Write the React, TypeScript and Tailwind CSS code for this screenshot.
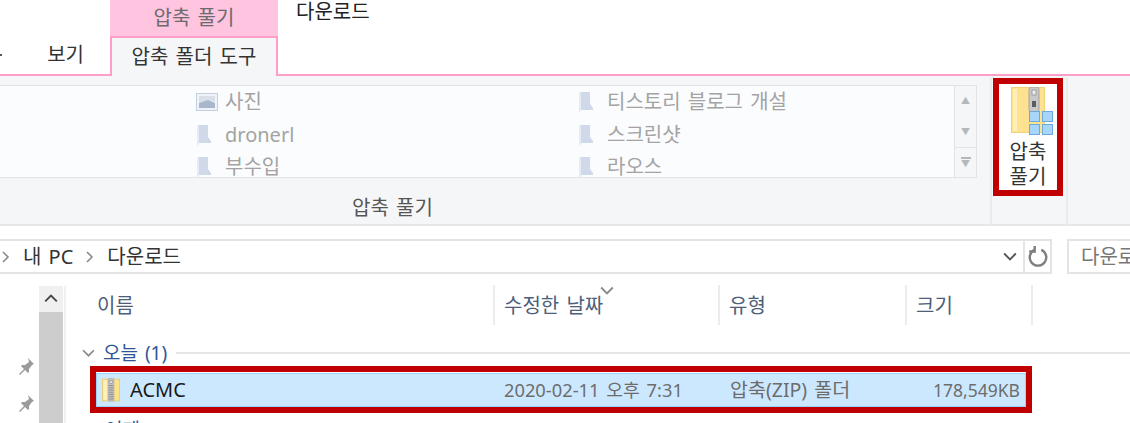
const font = '[font-family:"Noto_Sans","Noto_Sans_CJK_KR",sans-serif]';

function ZipFolderIcon({ className }: { className?: string }) {
  return (
    <svg viewBox="0 0 24 32" className={className}>
      <rect x="0.5" y="1.5" width="23" height="29" fill="#fde28c" stroke="#e8c76a" />
      <rect x="2" y="3" width="5" height="26" fill="#fff0b8" />
      <rect x="8" y="0" width="8" height="31" rx="2" fill="#c4c4c4" stroke="#999" strokeWidth="0.6" />
      <rect x="10.5" y="3" width="3" height="4" fill="#e6e6e6" stroke="#777" strokeWidth="0.6" />
      <path d="M9 10h6M9 13h6M9 16h6M9 19h6M9 22h6M9 25h6M9 28h6" stroke="#7c7c7c" strokeWidth="1" />
    </svg>
  );
}

function ExtractIcon() {
  return (
    <svg viewBox="0 0 42 48" className="h-[48px] w-[42px]">
      <rect x="0.5" y="0.5" width="33" height="45" fill="#fee28f" stroke="#f0d27c" />
      <rect x="2" y="2" width="4" height="42" fill="#fff0b8" />
      <rect x="18" y="0" width="10" height="25" rx="2.5" fill="#c9c9c9" stroke="#a3a3a3" />
      <rect x="21" y="3" width="4" height="5" fill="#ececec" stroke="#888" strokeWidth="0.7" />
      <rect x="21" y="14" width="4" height="6" fill="#5c5c5c" />
      <g fill="#a8d6fb" stroke="#6da9dc" strokeWidth="1">
        <rect x="18.5" y="24.5" width="10" height="10" />
        <rect x="31.5" y="24.5" width="10" height="10" />
        <rect x="18.5" y="37.5" width="10" height="10" />
        <rect x="31.5" y="37.5" width="10" height="10" />
      </g>
    </svg>
  );
}

function FolderGhost() {
  return (
    <svg viewBox="0 0 16 22" className="h-[22px] w-[16px]">
      <path d="M1 1h11v12l3 4v2H3l-2 3z" fill="#cfd9e9" />
      <path d="M1 1h2v18l-2 3z" fill="#e6ecf5" />
    </svg>
  );
}

function PictureGhost() {
  return (
    <svg viewBox="0 0 22 18" className="h-[18px] w-[22px]">
      <rect x="0.5" y="0.5" width="21" height="17" fill="#f0f3f8" stroke="#c3cfe0" />
      <path d="M3 3h16v6L12 7 3 10z" fill="#d9e0ea" />
      <path d="M3 10l9-3 7 3v5H3z" fill="#a9b6cc" />
    </svg>
  );
}

function PinIcon() {
  return (
    <svg viewBox="0 0 18 18" className="h-[18px] w-[18px]">
      <path d="M11 1l6 6-2 1-3 4 0 3-1 1-3-3-5 5-1-1 5-5-3-3 1-1h3l4-3z" fill="#9b9b9b" />
    </svg>
  );
}

function Chevron({ dir, className }: { dir: 'right' | 'down' | 'up'; className?: string }) {
  const d = dir === 'right' ? 'M3 1l5 5-5 5' : dir === 'down' ? 'M1 3l5 5 5-5' : 'M1 8l5-5 5 5';
  return (
    <svg viewBox="0 0 12 12" className={className} fill="none" stroke="currentColor" strokeWidth="1.6">
      <path d={d} />
    </svg>
  );
}

function GalleryItem({ label, picture }: { label: string; picture?: boolean }) {
  return (
    <div className="flex h-[32.5px] items-center">
      <div className="flex w-[29px] justify-start">{picture ? <PictureGhost /> : <FolderGhost />}</div>
      <span className="text-[20px] leading-none text-[#a3a3a3]">{label}</span>
    </div>
  );
}

const columns = [
  { label: '이름', width: 'w-[398px]', pl: 'pl-[0px]', border: 'border-r-2' },
  { label: '수정한 날짜', width: 'w-[225px]', pl: 'pl-[9px]', border: 'border-r-2' },
  { label: '유형', width: 'w-[187px]', pl: 'pl-[9px]', border: 'border-r-2' },
  { label: '크기', width: 'w-[126px]', pl: 'pl-[9px]', border: 'border-r-2' },
];

export default function App() {
  return (
    <div className={`h-[423px] w-[1130px] overflow-hidden bg-white [word-spacing:2px] ${font}`}>
      {/* context tab title */}
      <div className="flex h-[36px]">
        <div className="w-[110px]" />
        <div className="flex w-[168px] items-center justify-center bg-[#ffc4e0] text-[20px] text-[#6b6b6b]">압축 풀기</div>
        <div className="pl-[18px] text-[20px] leading-[24px] text-[#222]">다운로드</div>
      </div>

      {/* tabs */}
      <div className="flex h-[40px] border-b-2 border-[#ff9ec8]">
        <div className="flex w-[110px] items-center justify-between pr-[26px] text-[20px] text-[#333]">
          <div className="h-[2px] w-[2px] bg-[#555]" />
          보기
        </div>
        <div className="-mb-[2px] flex w-[168px] items-center justify-center border-x-2 border-t-2 border-[#ff9ec8] bg-[#f5f6f7] text-[20px] text-[#333]">
          압축 폴더 도구
        </div>
      </div>

      {/* ribbon */}
      <div className="flex h-[150px] border-b-2 border-[#e6e6e6] bg-[#f5f6f7]">
        <div className="flex w-[990px] flex-col">
          <div className="mt-[9px] flex">
            <div className="grid h-[93px] w-[955px] grid-cols-[382px_1fr] content-start border border-l-0 border-[#e2e3e5] bg-[#fbfcfe] pl-[196px]">
              <GalleryItem label="사진" picture />
              <GalleryItem label="티스토리 블로그 개설" />
              <GalleryItem label="dronerl" />
              <GalleryItem label="스크린샷" />
              <GalleryItem label="부수입" />
              <GalleryItem label="라오스" />
            </div>
            <div className="flex h-[93px] w-[22px] flex-col items-center border border-l-0 border-[#e2e3e5] text-[#b4b8bd]">
              <div className="flex h-[30px] items-center text-[9px]">▲</div>
              <div className="flex h-[32px] items-center text-[9px]">▼</div>
              <div className="flex h-[30px] w-full flex-col items-center justify-center border-t border-[#e2e3e5]">
                <div className="h-[2px] w-[10px] bg-[#b4b8bd]" />
                <div className="text-[9px] leading-[10px]">▼</div>
              </div>
            </div>
          </div>
          <div className="flex flex-1 items-end pb-[1px] pl-[352px] text-[20px] leading-[30px] text-[#555]">압축 풀기</div>
        </div>
        <div className="mt-[2px] h-[147px] w-[78px] border-x-2 border-[#e9eaec] pl-[1px]">
          <div className="flex h-[118px] w-[70px] flex-col border-[6px] border-[#c00000] bg-white pt-[3px]">
            <div className="pl-[12px]">
              <ExtractIcon />
            </div>
            <div className="mt-[4px] text-center text-[20px] leading-[25px] text-[#333]">
              압축
              <br />
              풀기
            </div>
          </div>
        </div>
      </div>

      {/* address bar */}
      <div className="mt-[13px] flex h-[35px]">
        <div className="flex w-[1052px] items-center border-y-2 border-r-2 border-[#e4e4e4] text-[20px] text-[#333]">
          <Chevron dir="right" className="h-[12px] w-[12px] text-[#8a8a8a]" />
          <span className="ml-[11px]">내 PC</span>
          <Chevron dir="right" className="ml-[11px] h-[12px] w-[12px] text-[#8a8a8a]" />
          <span className="ml-[11px]">다운로드</span>
          <div className="flex-1" />
          <Chevron dir="down" className="mr-[6px] h-[14px] w-[14px] text-[#555]" />
          <div className="flex h-full w-[27px] items-center justify-center border-l-2 border-[#e4e4e4]">
            <svg viewBox="0 0 20 20" className="h-[22px] w-[22px]" fill="none" stroke="#7f7f7f" strokeWidth="2.2">
              <path d="M13 3.5a7.5 7.5 0 1 1-6 0" />
              <path d="M6 0v5h-5" transform="translate(1 0)" />
            </svg>
          </div>
        </div>
        <div className="ml-[15px] flex-1 overflow-hidden whitespace-nowrap border-y-2 border-l-2 border-[#e4e4e4] pl-[12px] text-[20px] leading-[31px] text-[#777]">
          다운로드
        </div>
      </div>

      {/* file list */}
      <div className="flex h-[149px]">
        <div className="flex w-[66px]">
          <div className="relative w-[39px]">
            <div className="absolute left-[17px] top-[83px]">
              <PinIcon />
            </div>
            <div className="absolute left-[17px] top-[120px]">
              <PinIcon />
            </div>
          </div>
          <div className="mt-[12px] w-[24px] bg-[#cdcdcd]">
            <div className="flex h-[26px] items-center justify-center bg-[#f0f0f0] text-[#444]">
              <Chevron dir="up" className="h-[14px] w-[14px]" />
            </div>
          </div>
          <div className="mt-[12px] w-[3px] border-r-2 border-[#f0f0f0]" />
        </div>

        <div className="flex-1 pl-[24px]">
          <div className="mt-[11px] flex h-[40px] pl-[7px]">
            {columns.map((col) => (
              <div
                key={col.label}
                className={`relative flex items-center pt-[1px] ${col.width} ${col.pl} ${col.border} border-[#ececec] text-[20px] text-[#4c607a]`}
              >
                {col.label}
                {col.label === '수정한 날짜' && (
                  <Chevron dir="down" className="absolute left-[105px] top-[-1px] h-[14px] w-[14px] text-[#8a8a8a]" />
                )}
              </div>
            ))}
          </div>

          <div className="mt-[16px] flex h-[24px] items-center">
            <Chevron dir="down" className="ml-[-8px] h-[13px] w-[13px] text-[#8a8a8a]" />
            <span className="ml-[8px] text-[19px] text-[#2f5597]">오늘 (1)</span>
            <div className="ml-[9px] h-[2px] flex-1 bg-[#e6e6e6]" />
          </div>

          <div className="mt-[1px] h-[47px] w-[942px] border-[6px] border-[#c00000]">
            <div className="mt-[1px] flex h-[34px] items-center border border-[#99d1ff] bg-[#cce8ff]">
              <ZipFolderIcon className="ml-[5px] h-[24px] w-[18px]" />
              <span className="ml-[10px] w-[374px] text-[20px] text-[#1a1a1a]">ACMC</span>
              <span className="w-[226px] text-[18.3px] text-[#6d6d6d]">2020-02-11 오후 7:31</span>
              <span className="w-[160px] text-[19.5px] text-[#6d6d6d]">압축(ZIP) 폴더</span>
              <span className="w-[130px] text-right text-[17.5px] text-[#6d6d6d]">178,549KB</span>
            </div>
          </div>

          <div className="mt-[5px] pl-[15px] text-[19px] leading-[24px] text-[#2f5597]">어제</div>
        </div>
      </div>
    </div>
  );
}
